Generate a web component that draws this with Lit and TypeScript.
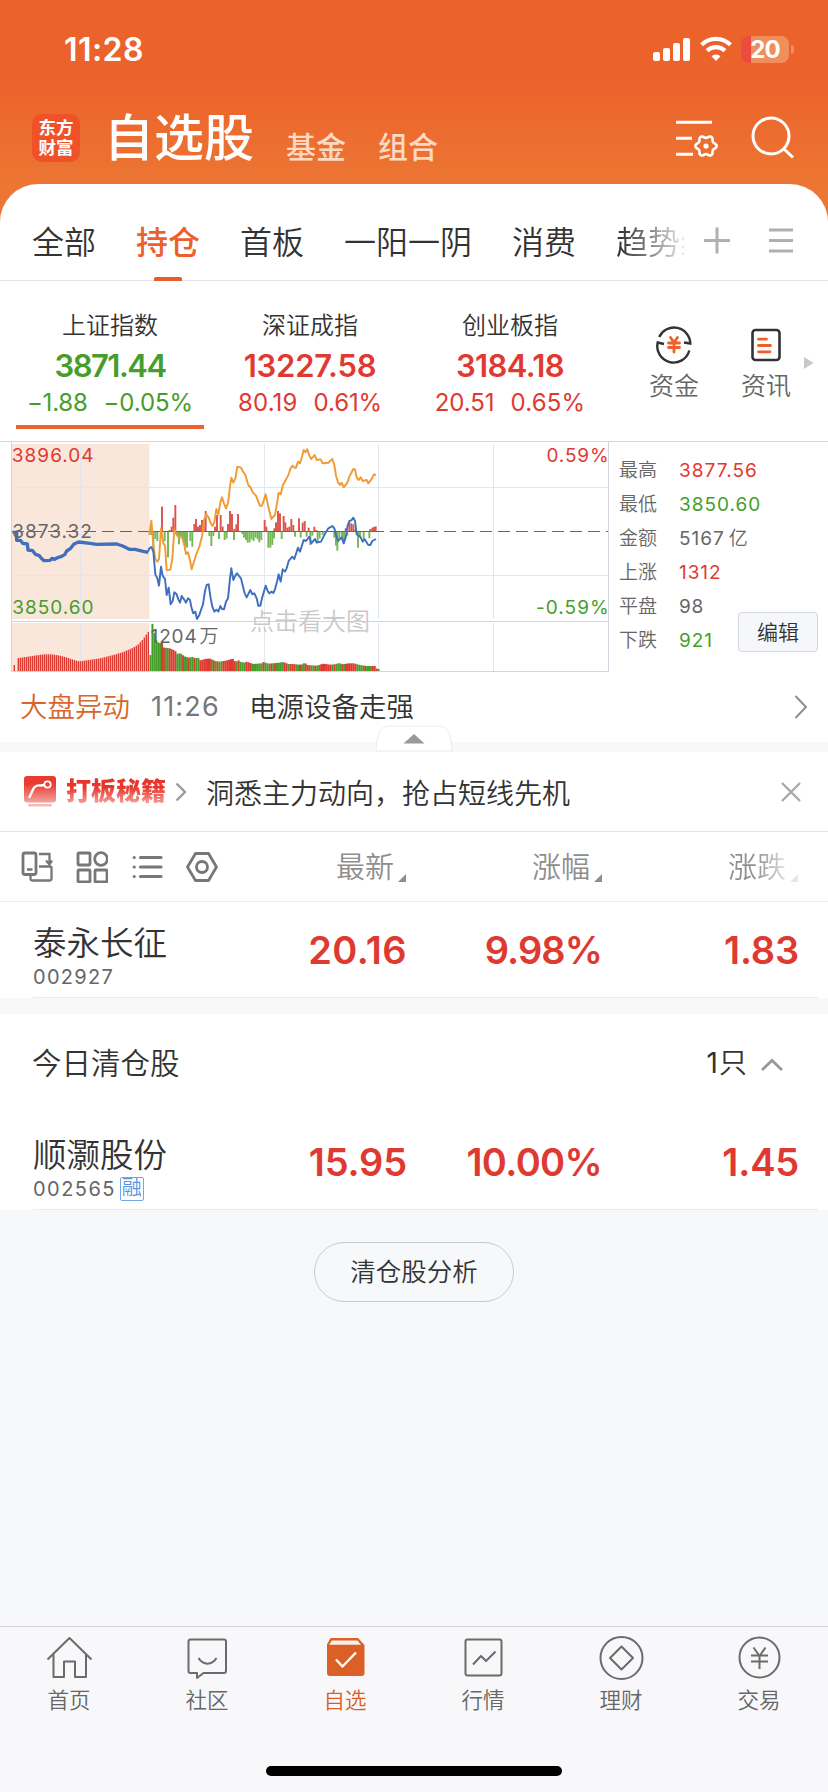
import { LitElement, html, svg, css } from "lit";
import { customElement } from "lit/decorators.js";
import { styleMap } from "lit/directives/style-map.js";
import { classMap } from "lit/directives/class-map.js";

type Num = { t: string; ls: number };
const n = (t: string, ls = 0): Num => ({ t, ls });
const num = (v: Num) => html`<span class="num" style=${styleMap({ letterSpacing: `${v.ls}px` })}>${v.t}</span>`;

const RED = "#df3a31";
const GREEN = "#459e2b";

/* ---------- chart data ---------- */
const ORANGE_LINE =
  "28,300 34,257 40,330 46,372 52,380 57,372 63,280 70,325 75,332 80,405 91,404 97,372 103,283 110,300 118,308 126,306 133,330 138,357 144,352 150,375 155,403 162,380 168,360 178,335 187,300 192,255 199,238 206,248 211,262 217,273 223,262 229,222 235,238 241,202 246,187 252,205 258,220 264,205 270,155 274,128 280,143 286,130 292,95 303,98 308,108 316,120 325,150 332,158 338,172 348,182 360,213 366,212 377,178 385,215 394,252 405,240 411,205 416,173 422,178 429,150 440,130 446,118 451,102 457,92 463,98 468,98 474,80 480,85 486,65 491,45 497,52 502,43 508,62 514,72 524,60 530,75 542,73 548,85 565,83 577,72 583,90 588,122 594,142 600,150 605,143 611,157 622,143 628,125 640,102 645,103 650,128 656,135 662,127 668,138 680,135 685,145 696,130 702,118 708,120";
const BLUE_LINE =
  "24,350 28,340 34,336 40,350 46,418 52,430 57,452 63,395 68,422 75,432 80,480 86,458 92,508 98,498 103,472 110,478 115,493 120,503 125,483 132,493 138,503 144,490 150,495 155,520 160,535 166,530 171,552 178,540 183,525 189,508 195,468 200,450 206,448 212,490 217,515 223,530 229,524 235,530 241,513 246,522 252,523 258,500 264,490 270,430 274,400 280,435 286,422 291,415 303,430 309,455 314,475 320,487 331,465 337,478 343,475 350,490 355,512 361,512 366,490 377,452 383,468 388,475 394,470 400,474 405,463 411,440 416,418 422,440 428,403 435,410 440,400 446,378 457,365 463,372 474,338 480,350 491,315 498,318 508,305 514,325 525,312 530,323 543,320 554,298 565,280 577,273 583,280 588,300 594,318 605,307 611,325 617,308 622,275 628,258 634,256 640,248 645,258 650,298 662,307 668,320 674,313 685,330 691,330 697,318 708,312";
const PRE_LINE =
  "38,292 50,292 50,316 62,316 68,325 82,327 84,345 98,347 106,358 118,362 124,370 132,377 150,376 156,370 164,373 175,367 185,364 195,358 200,348 212,340 222,327 236,321 270,325 290,328 350,327 368,333 388,343 405,343 430,349 445,352";

const UP: [number, number][] = [
  [66, 215], [89, 285], [95, 275], [100, 248], [106, 210], [163, 267], [168, 252], [174, 275], [180, 270], [186, 255], [191, 262], [197, 228],
  [225, 275], [231, 240], [242, 240], [248, 275], [264, 267], [270, 228], [276, 237], [283, 282], [289, 268], [294, 237], [374, 255], [379, 275],
  [403, 280], [408, 262], [414, 228], [420, 235], [431, 243], [436, 262], [442, 278], [448, 275], [454, 252], [460, 270], [477, 250], [488, 263],
  [494, 258], [506, 278], [523, 275], [529, 285], [617, 280], [628, 262], [634, 265], [640, 268], [646, 282], [691, 282], [697, 278], [702, 276], [707, 274],
];
const DOWN: [number, number][] = [
  [34, 300], [40, 345], [46, 312], [52, 318], [74, 318], [84, 367], [111, 300], [117, 328], [123, 305], [129, 318], [135, 335], [141, 338], [151, 318],
  [157, 335], [208, 303], [214, 333], [220, 303], [237, 312], [254, 315], [260, 310], [282, 315], [307, 297], [312, 308], [318, 315], [323, 323], [329, 322],
  [335, 313], [341, 318], [347, 308], [353, 313], [358, 322], [364, 315], [385, 338], [391, 338], [397, 330], [402, 310], [425, 312], [465, 305],
  [482, 308], [500, 305], [511, 330], [517, 302], [533, 322], [539, 310], [548, 300], [583, 308], [588, 332], [592, 347], [598, 315], [606, 308],
  [612, 325], [622, 302], [654, 338], [660, 305], [671, 313], [688, 310],
];

const lerp = (keys: [number, number][], x: number) => {
  for (let i = 1; i < keys.length; i++) {
    const [x0, y0] = keys[i - 1];
    const [x1, y1] = keys[i];
    if (x <= x1) return y0 + ((y1 - y0) * (x - x0)) / (x1 - x0);
  }
  return keys[keys.length - 1][1];
};
const PRE_VOL: [number, number][] = [
  [50, 670], [90, 664], [130, 658], [158, 658], [180, 662], [200, 667], [222, 675], [238, 679], [260, 676], [300, 670], [340, 660], [370, 651],
  [400, 638], [415, 628], [430, 612], [444, 591],
];
const VOL: [number, number][] = [
  [37, 565], [42, 590], [48, 614], [57, 625], [66, 623], [72, 638], [90, 640], [105, 647], [112, 656], [122, 655], [133, 664], [150, 669], [155, 664],
  [165, 670], [174, 667], [180, 676], [200, 671], [212, 671], [225, 678], [240, 680], [262, 676], [278, 671], [288, 682], [294, 674], [300, 680],
  [312, 683], [320, 680], [340, 687], [365, 685], [371, 681], [385, 686], [410, 684], [430, 681], [445, 687], [460, 687], [475, 689], [490, 688],
  [494, 680], [500, 690], [530, 692], [550, 686], [570, 689], [584, 688], [598, 684], [608, 688], [625, 685], [642, 685], [660, 690], [680, 693],
  [705, 693], [711, 702],
];
const RED_SPANS: [number, number][] = [
  [63, 69], [86, 92], [97, 108], [126, 131], [143, 148], [161, 166], [178, 212], [217, 222], [230, 234], [246, 286], [292, 297], [312, 328], [366, 371],
  [389, 392], [402, 406], [428, 440], [446, 462], [474, 480], [491, 508], [520, 525], [537, 570], [577, 582], [600, 606], [611, 645], [672, 677], [691, 708],
];

/* ---------- small icons ---------- */
const gearPath = (() => {
  const pts: string[] = [];
  for (let i = 0; i < 72; i++) {
    const a = (i / 72) * Math.PI * 2;
    const r = 9.3 + 1.3 * Math.cos(6 * a);
    pts.push(`${(30 + r * Math.cos(a)).toFixed(2)},${(28 + r * Math.sin(a)).toFixed(2)}`);
  }
  return `M${pts.join("L")}Z`;
})();

const tabIcons = {
  home: svg`<path d="M2.500 23.500 24.500 2 46.500 23.500M8.500 18.500V41H19V25.500H30V41H41V18.500"/>`,
  chat: svg`<path d="M7.500 3.500H41a2 2 0 0 1 2 2V35a2 2 0 0 1-2 2H20.500L14 42V37H7.500a2 2 0 0 1-2-2V5.500a2 2 0 0 1 2-2ZM15.500 22c4.500 7.500 13.500 7.500 18 0"/>`,
  box: svg`<path class="solid" d="M9.500 2H37l6.500 7V37a3 3 0 0 1-3 3H9a3 3 0 0 1-3-3V8.500Z"/><path class="lid" d="M11 4.500H36.500L40 8.800H8Z"/><path class="tick" d="M15 23.500 21.500 30.500 35 16.500"/>`,
  trend: svg`<rect x="6.500" y="3.500" width="36" height="36" rx="2"/><path d="M14 28.500 22 20 27 25 36.500 15.500"/>`,
  wealth: svg`<circle cx="24.500" cy="22" r="21"/><path d="M24.500 10.500 36 22 24.500 33.500 13 22Z"/>`,
  trade: svg`<circle cx="24.500" cy="21.500" r="20"/><path d="M18.500 11.500 24.500 20 30.500 11.500M16 19.500H33M16 25.500H33M24.500 20V33"/>`,
};

@customElement("market-chart")
export class MarketChart extends LitElement {
  static styles = css`
    :host { display: block; width: 609px; height: 231px; }
    svg { display: block; }
    text { font-family: Inter, "Noto Sans CJK SC", sans-serif; font-size: 19px; font-weight: 400; }
    .mark { font-size: 24px; fill: #c9c9cb; font-weight: 350; }
    .frame { stroke: #d3d5de; fill: none; }
    .grid { stroke: #e3e5f0; fill: none; }
    .r { fill: #df3a31; }
    .g { fill: #459e2b; }
    .k { fill: #666; }
    .cjk { font-weight: 350; }
  `;
  render() {
    const pre = [];
    for (let x = 43; x < 447; x += 6) if (x !== 49) pre.push({ x, y: x === 43 ? 690 : lerp(PRE_VOL, x) });
    const vol = [{ x: 28.5, y: 660 }];
    for (let x = 34.3; x < 713; x += 5.75) vol.push({ x, y: lerp(VOL, x + 3) });
    const isRed = (x: number) => RED_SPANS.some(([a, b]) => x >= a - 1 && x < b);
    return html`<svg width="609" height="231" viewBox="0 441 609 231">
      <rect x="12" y="444" width="137.500" height="175" fill="#f9e7dc" />
      <rect x="12" y="623" width="137.500" height="48" fill="#f9e7dc" />
      <path class="grid" d="M12 487.500H608M12 575.500H608M80.500 444V619M80.500 623V671M264.500 444V619M264.500 623V671M378.500 444V619M378.500 623V671M493.500 444V619M493.500 623V671" />
      <g transform="translate(140 435) scale(.33333)">
        ${UP.map(([x, y]) => svg`<rect x=${x - 2.9} y=${y} width="5.800" height=${290 - y} fill="#d9564f" />`)}
        ${DOWN.map(([x, y]) => svg`<rect x=${x - 2.9} y="290" width="5.800" height=${y - 290} fill="#76b856" />`)}
        ${vol.map(({ x, y }) => svg`<rect x=${x} y=${y} width="5.950" height=${708 - y} fill=${isRed(x) ? RED : GREEN} />`)}
      </g>
      <g transform="translate(0 435) scale(.33333)">
        ${pre.map(({ x, y }) => svg`<rect x=${x - 2.2} y=${y} width="4.200" height=${708 - y} fill="#df3a31" />`)}
      </g>
      <path d="M12 531.500H608" stroke="#666" stroke-dasharray="12 6" />
      <path d="M150 531.500H378" stroke="#666" />
      <g fill="none" stroke-linejoin="round">
        <polyline transform="translate(140 435) scale(.33333)" points=${ORANGE_LINE} stroke="#f09b33" stroke-width="5.800" />
        <polyline transform="translate(0 435) scale(.33333)" points=${PRE_LINE} stroke="#4070bd" stroke-width="10" />
        <polyline transform="translate(140 435) scale(.33333)" points=${BLUE_LINE} stroke="#4070bd" stroke-width="5.800" />
      </g>
      <path class="frame" d="M0 441.500H609" />
      <path class="frame" d="M11.500 441V671.500H608.500V441M11 621.500H608" />
      <text class="r" x="11.800" y="462" letter-spacing="1.020">3896.04</text>
      <text class="k" x="12.300" y="537.700" letter-spacing="1.010">3873.32</text>
      <text class="g" x="12.300" y="613.700" letter-spacing="1">3850.60</text>
      <text class="r" x="546.500" y="462" letter-spacing=".86">0.59%</text>
      <text class="g" x="536" y="614" letter-spacing="1.040">-0.59%</text>
      <text class="k" x="150.500" y="643" letter-spacing=".9">1204</text>
      <text class="k cjk" x="199.500" y="643">万</text>
      <text class="mark" x="250" y="630">点击看大图</text>
    </svg>`;
  }
}

@customElement("app-root")
export class AppRoot extends LitElement {
  static styles = css`
    :host {
      display: block;
      width: 828px;
      height: 1792px;
      overflow: hidden;
      color: #333;
      font-family: Inter, "Noto Sans CJK SC", sans-serif;
      font-weight: 350;
      background: #f7f8fa;
    }
    * { box-sizing: border-box; }
    svg { display: block; flex: none; fill: none; }
    .page { display: flex; flex-direction: column; height: 1792px; background: linear-gradient(#ec622b 0, #ec622b 78px, #ec7734 190px) 0 0 / 828px 260px no-repeat; }
    .red { color: #df3a31; }
    .green { color: #459e2b; }

    .status { height: 99px; display: flex; justify-content: space-between; padding: 0 34px 0 64px; color: #fff; }
    .clock { font-size: 32px; font-weight: 600; line-height: 100px; letter-spacing: 0.45px; }
    .sys { display: flex; padding-top: 36px; }
    .wifi { margin-left: 9px; }
    .battery { width: 48px; height: 27px; margin-left: 9px; border-radius: 8px; font-size: 24px; font-weight: 700; line-height: 27px; text-align: center; letter-spacing: -1px;
      background: linear-gradient(90deg, #ec4b3e 10px, #f08f5d 10px); }
    .nub { width: 3px; height: 9px; margin: 9px 0 0 2px; border-radius: 0 4px 4px 0; background: #f08f5d; }

    .head { height: 85px; display: flex; align-items: flex-start; padding-left: 32px; color: #fff; }
    .logo { width: 48px; height: 48px; margin-top: 15px; border-radius: 10px; background: #ef5229; font-size: 17.500px; font-weight: 700; line-height: 20px; text-align: center; padding-top: 4px; }
    .title { margin: 8px 0 0 24px; font-size: 50px; line-height: 62px; font-weight: 500; }
    .alt { margin: 28px 0 0 32px; font-size: 30px; line-height: 40px; font-weight: 500; color: #fbd9c4; }
    .head-icons { margin-left: auto; display: flex; padding: 13px 32px 0 0; gap: 30px; stroke: #fff; stroke-width: 3; }

    .card { background: #fff; border-radius: 38px 38px 0 0; }
    .tabs { height: 97px; display: flex; border-bottom: 1px solid #e2e2e2; padding: 0 35px 0 32px; align-items: flex-start; }
    .tab-list { display: flex; gap: 40px; width: 652px; height: 97px; padding-top: 9px; overflow: hidden; font-size: 32px; white-space: nowrap; }
    .tab { height: 88px; display: flex; flex-direction: column; align-items: center; }
    .lbl { display: block; height: 84px; line-height: 100px; }
    .on { color: #eb602b; font-weight: 500; }
    .bar { width: 28px; height: 4px; background: #e3602d; border-radius: 2px 2px 0 0; }
    .fade { background: linear-gradient(90deg, #333 5px, #fff 76px); background-clip: text; color: transparent; width: 96px; }
    .tab-tools { margin-left: auto; display: flex; gap: 39px; padding-top: 43px; stroke: #b0b0b0; stroke-width: 3; }

    .indices { height: 160px; display: flex; padding-left: 10px; }
    .index { width: 200px; padding-top: 27px; display: flex; flex-direction: column; align-items: center; }
    .iname { font-size: 24px; line-height: 36px; color: #333; }
    .ival { font-size: 31px; font-weight: 600; line-height: 44px; }
    .ichg { font-size: 24px; line-height: 30px; display: flex; gap: 16px; font-weight: 400; }
    .uline { width: 188px; height: 4px; margin-top: 7px; background: #ed632b; }
    .quick { display: flex; padding: 44px 0 0 39px; }
    .q { width: 50px; display: flex; flex-direction: column; align-items: center; font-size: 25px; line-height: 31px; color: #666; gap: 6px; }
    .q + .q { margin-left: 42px; }
    .more { margin: 32px 0 0 13px; }

    .board { display: flex; position: relative; height: 231px; }
    .facts { flex: 1; border-top: 1px solid #d3d5de; padding: 12px 0 0 10px; font-size: 19px; line-height: 34px; color: #666; }
    .fact { display: grid; grid-template-columns: 60px auto auto; justify-content: start; }
    .fact .num, .scode .num { font-weight: 400; }
    .unit { margin-left: 4px; }
    .edit { position: absolute; right: 10px; top: 171px; width: 80px; height: 40px; line-height: 39px; text-align: center; font-size: 21px; border: 1px solid #d4d6de; border-radius: 4px; background: #f6f7fb; color: #333; }

    .news { height: 70px; display: grid; grid-template-columns: 131px 98px 1fr auto; align-items: center; padding: 0 20px; font-size: 27.500px; line-height: 40px; }
    .news .tag { color: #d9652b; }
    .news .time { color: #777; letter-spacing: 1.2px; font-size: 27px; font-weight: 400; }
    .gap1 { height: 10px; background: #f7f8fa; position: relative; }
    .bump { position: absolute; left: 375px; top: -17px; }

    .promo { height: 80px; display: flex; align-items: center; border-bottom: 1px solid #e2e2e2; padding: 0 27px 0 24px; background: #fff; font-size: 28px; }
    .brand { margin: -1px 0 0 10px; font-size: 25px; font-weight: 900; line-height: 32px; background: linear-gradient(#e8352b 38%, #f5a09a 90%); background-clip: text; color: transparent; }
    .go { margin-left: 9px; }
    .slogan { margin: 0 0 0 19px; }
    .closer { margin-left: auto; }

    .cols { height: 70px; display: grid; grid-template-columns: 1fr 196px 196px; padding: 0 30px 0 0; align-items: center; border-bottom: 1px solid #ededed; background: #fff; color: #8e8e8e; font-size: 29px; }
    .cell-h { display: flex; justify-content: flex-end; gap: 4px; align-items: flex-end; line-height: 34px; padding-top: 3px; }
    .first { display: flex; align-items: center; justify-content: space-between; }
    .tools { display: flex; padding-left: 21px; gap: 23px; stroke: #777; stroke-width: 2.8; }
    .cell-h svg { margin-bottom: 3px; fill: #8e8e8e; }
    .dim { color: transparent; background: linear-gradient(90deg, #8e8e8e 45%, #ddd 98%); background-clip: text; }
    .cell-h.last svg { fill: #e6e6e6; }

    .stock { height: 96px; background: #fff; padding: 0 10px 0 33px; }
    .stock-in { height: 96px; display: grid; grid-template-columns: 1fr 200px 195px 197px; padding-right: 19px; border-bottom: 1px solid #ebebeb; align-items: start; }
    .sname { font-size: 33.500px; line-height: 38px; padding-top: 22px; white-space: nowrap; }
    .scode { display: flex; align-items: center; gap: 4px; font-size: 20px; line-height: 28px; color: #666; padding-top: 1px; }
    .badge { width: 24px; height: 24px; border: 1px solid #76a5e6; border-radius: 2px; color: #5b93df; font-size: 20px; line-height: 21px; text-align: center; }
    .sval { font-size: 38px; font-weight: 600; line-height: 96px; text-align: right; color: #df3a31; }
    .gap2 { height: 16px; background: #f7f8fa; }
    .sect { height: 100px; background: #fff; display: flex; align-items: center; padding: 0 44px 2px 32px; font-size: 29.500px; line-height: 40px; }
    .count { margin-left: auto; font-size: 28px; margin-right: 12px; letter-spacing: 1px; font-weight: 400; }
    .count .cjk { font-weight: 350; }
    .sect svg { margin-top: 3px; }
    .pill { align-self: center; margin-top: 32px; width: 200px; height: 60px; border: 1px solid #c9cace; border-radius: 30px; font-size: 25.500px; line-height: 58px; text-align: center; }

    .bottom { margin-top: auto; height: 166px; border-top: 1px solid #d3d4dd; background: #f8f8fa; display: flex; flex-direction: column; align-items: center; }
    .nav { display: flex; width: 828px; height: 139px; }
    .nav-i { width: 138px; padding-top: 9px; display: flex; flex-direction: column; align-items: center; font-size: 21.500px; line-height: 30px; color: #666; gap: 3px; }
    .nav-i svg { stroke: #6b6b6b; stroke-width: 2; stroke-linejoin: round; }
    .nav-i.sel { color: #d95f27; }
    .solid { fill: #da6027; stroke: none; }
    .lid { fill: #fbeee6; stroke: none; }
    .nav-i svg .tick { stroke: #fff; stroke-width: 2.4; }
    .pillbar { width: 296px; height: 10px; border-radius: 5px; background: #000; }
  `;

  private index(name: string, v: Num, a: Num, b: Num, tone: string, on = false) {
    return html`<div class="index">
      <div class="iname">${name}</div>
      <div class="ival ${tone}">${num(v)}</div>
      <div class="ichg ${tone}">${num(a)}${num(b)}</div>
      ${on ? html`<div class="uline"></div>` : ""}
    </div>`;
  }

  private stock(name: string, code: Num, vals: Num[], margin = false) {
    return html`<div class="stock"><div class="stock-in">
      <div><div class="sname">${name}</div>
        <div class="scode">${num(code)}${margin ? html`<span class="badge">融</span>` : ""}</div></div>
      ${vals.map((v) => html`<div class="sval">${num(v)}</div>`)}
    </div></div>`;
  }

  render() {
    const facts: [string, Num, string, string][] = [
      ["最高", n("3877.56", 1.04), "red", ""],
      ["最低", n("3850.60", 1), "green", ""],
      ["金额", n("5167", 1), "", "亿"],
      ["上涨", n("1312", 0.94), "red", ""],
      ["平盘", n("98", 0.6), "", ""],
      ["下跌", n("921", 1), "green", ""],
    ];
    const nav: [keyof typeof tabIcons, string][] = [
      ["home", "首页"], ["chat", "社区"], ["box", "自选"], ["trend", "行情"], ["wealth", "理财"], ["trade", "交易"],
    ];
    const tri = html`<svg width="8" height="8"><path d="M8 0V8H0Z" /></svg>`;
    return html`<div class="page">
      <div class="status">
        <div class="clock">11:28</div>
        <div class="sys">
          <svg width="38" height="28"><g fill="#fff"><rect x="0" y="16" width="7" height="9" rx="2" /><rect x="10" y="12" width="7" height="13" rx="2" /><rect x="20" y="7" width="7" height="18" rx="2" /><rect x="30" y="2" width="7" height="23" rx="2" /></g></svg>
          <svg class="wifi" width="32" height="28" viewBox="0 0 32 28"><path d="M1.500 8.800A20.500 20.500 0 0 1 30.500 8.800M7 14.800A12.800 12.800 0 0 1 25 14.800" stroke="#fff" stroke-width="4.200" /><path d="M16 25 11.500 20.300A6.500 6.500 0 0 1 20.500 20.300Z" fill="#fff" /></svg>
          <div class="battery">20</div>
          <div class="nub"></div>
        </div>
      </div>
      <div class="head">
        <div class="logo">东方<br />财富</div>
        <div class="title">自选股</div>
        <div class="alt">基金</div>
        <div class="alt">组合</div>
        <div class="head-icons">
          <svg width="44" height="46" viewBox="0 -6 44 46"><path d="M0 4.200H36M0 20.200H16M0 36.200H17" /><path d=${gearPath} stroke-width="2.600" /><circle cx="30" cy="28" r="2.600" fill="#fff" stroke="none" /></svg>
          <svg width="46" height="50" viewBox="0 0 46 50"><circle cx="21" cy="24" r="18" /><path d="M34 37 43 45.500" /></svg>
        </div>
      </div>
      <div class="card">
        <div class="tabs">
          <div class="tab-list">
            ${["全部", "持仓", "首板", "一阳一阴", "消费", "趋势线"].map(
              (t, i) => html`<div class=${classMap({ tab: true, on: i === 1 })}><span class=${classMap({ lbl: true, fade: i === 5 })}>${t}</span>${i === 1 ? html`<span class="bar"></span>` : ""}</div>`,
            )}
          </div>
          <div class="tab-tools">
            <svg width="26" height="27"><path d="M0 13.500H26M13 .5V26.500" /></svg>
            <svg width="24" height="27"><path d="M0 3H24M0 13.500H24M0 24H24" /></svg>
          </div>
        </div>
        <div class="indices">
          ${this.index("上证指数", n("3871.44", -1.51), n("−1.88", -0.22), n("−0.05%", -0.09), "green", true)}
          ${this.index("深证成指", n("13227.58", -0.22), n("80.19", 0.13), n("0.61%", -0.12), "red")}
          ${this.index("创业板指", n("3184.18", -0.59), n("20.51", -0.08), n("0.65%", 0.17), "red")}
          <div class="quick">
            <div class="q">
              <svg width="40" height="40" viewBox="0 0 40 40"><g stroke="#333" stroke-width="2.400"><path d="M5.200 12A16.300 16.300 0 0 1 36.300 18.500L30 17.500" /><path d="M35.300 25.500A16.300 16.300 0 0 1 3.700 17.500L10 19" /></g><path d="M16.500 12.500 20 17.500 23.500 12.500M14.500 18H25.500M14.500 22.500H25.500M20 18V27" stroke="#eb602b" stroke-width="2.800" stroke-linecap="round" /></svg>
              资金
            </div>
            <div class="q">
              <svg width="40" height="40" viewBox="0 0 40 40"><rect x="6.500" y="5" width="27" height="30" rx="3" stroke="#333" stroke-width="2.600" /><path d="M12.500 14.200H20.500M12.500 20.500H24.500M12.500 26.800H24" stroke="#eb602b" stroke-width="2.800" stroke-linecap="round" /></svg>
              资讯
            </div>
            <svg class="more" width="10" height="12"><path d="M0 0 9.500 6 0 12Z" fill="#c8c8c8" /></svg>
          </div>
        </div>
        <div class="board">
          <market-chart></market-chart>
          <div class="facts">
            ${facts.map(([k, v, tone, unit]) => html`<div class="fact"><span>${k}</span><span class=${tone}>${num(v)}</span>${unit ? html`<span class="unit">${unit}</span>` : ""}</div>`)}
          </div>
          <div class="edit">编辑</div>
        </div>
        <div class="news">
          <span class="tag">大盘异动</span><span class="time">11:26</span><span>电源设备走强</span>
          <svg width="14" height="24"><path d="M1.500 1 12 12 1.500 23" stroke="#8e8e8e" stroke-width="2" /></svg>
        </div>
        <div class="gap1">
          <svg class="bump" width="78" height="28"><path d="M1 26C2.500 8 4 1 16 1H62C74 1 75.500 8 77 26Z" fill="#fff" stroke="#ececee" /><path d="M28.500 18.500 39 9 49.500 18.500Z" fill="#999" /></svg>
        </div>
      </div>
      <div class="promo">
        <svg width="32" height="32" viewBox="0 0 32 32">
          <defs><linearGradient id="pg" x1="0" y1="0" x2="0" y2="1"><stop offset=".3" stop-color="#ea3b31" /><stop offset="1" stop-color="#f4a39d" /></linearGradient></defs>
          <rect width="32" height="26.500" rx="3" fill="url(#pg)" /><rect x="4" y="28" width="24" height="2.500" rx="1.200" fill="#f7b9b4" />
          <path d="M5.500 21C9 15 8.500 8.500 17 9.500L20 9" stroke="#fff" stroke-width="2.400" stroke-linecap="round" /><circle cx="23.500" cy="8.500" r="3.200" stroke="#fff" stroke-width="1.800" />
        </svg>
        <span class="brand">打板秘籍</span>
        <svg class="go" width="12" height="20"><path d="M1.500 1.500 10 10 1.500 18.500" stroke="#9a9a9a" stroke-width="2.400" /></svg>
        <span class="slogan">洞悉主力动向，抢占短线先机</span>
        <svg class="closer" width="20" height="20"><path d="M1 1 19 19M19 1 1 19" stroke="#a8a8a8" stroke-width="2.400" /></svg>
      </div>
      <div class="cols">
        <div class="first">
          <div class="tools">
            <svg width="32" height="32" viewBox="0 0 32 32"><rect x="2" y="2" width="13" height="21.500" rx="2" /><path d="M6 18.500H11.500M18 3H28.500V12M25 9.500 28.500 13.500 31 9.500M18 15.500H29a1.500 1.500 0 0 1 1.500 1.500V28a1.500 1.500 0 0 1-1.500 1.500H11a1.500 1.500 0 0 1-1.500-1.500V25" stroke-width="2.300" /></svg>
            <svg width="32" height="32" viewBox="0 0 32 32"><rect x="2" y="2" width="12" height="12" rx="1" /><circle cx="25" cy="8" r="6.300" /><rect x="2" y="19" width="12" height="12" rx="1" /><rect x="19" y="19" width="12" height="12" rx="1" /></svg>
            <svg width="32" height="32" viewBox="0 0 32 32"><path d="M9.500 6.500H30M9.500 16H30M9.500 25.500H30M3.200 6.500H3.210M3.200 16H3.210M3.200 25.500H3.210" stroke-width="3.200" stroke-linecap="round" /></svg>
            <svg width="32" height="32" viewBox="0 0 32 32"><path d="M9.500 2.500H22.500L30.500 16 22.500 29.500H9.500L1.500 16Z" stroke-linejoin="round" /><circle cx="16" cy="16" r="5.500" /></svg>
          </div>
          <div class="cell-h">最新${tri}</div>
        </div>
        <div class="cell-h">涨幅${tri}</div>
        <div class="cell-h last"><span class="dim">涨跌</span>${tri}</div>
      </div>
      ${this.stock("泰永长征", n("002927", 1.29), [n("20.16", 0.38), n("9.98%", -0.9), n("1.83", -0.17)])}
      <div class="gap2"></div>
      <div class="sect"><span>今日清仓股</span><span class="count">1<span class="cjk">只</span></span>
        <svg width="24" height="14"><path d="M2 12 12 2.500 22 12" stroke="#999" stroke-width="2.800" /></svg>
      </div>
      ${this.stock("顺灏股份", n("002565", 1.45), [n("15.95", -0.14), n("10.00%", -0.65), n("1.45", -0.17)], true)}
      <div class="pill">清仓股分析</div>
      <div class="bottom">
        <div class="nav">
          ${nav.map(([ic, t]) => html`<div class=${classMap({ "nav-i": true, sel: ic === "box" })}><svg width="49" height="46" viewBox="0 0 49 46">${tabIcons[ic]}</svg>${t}</div>`)}
        </div>
        <div class="pillbar"></div>
      </div>
    </div>`;
  }
}
